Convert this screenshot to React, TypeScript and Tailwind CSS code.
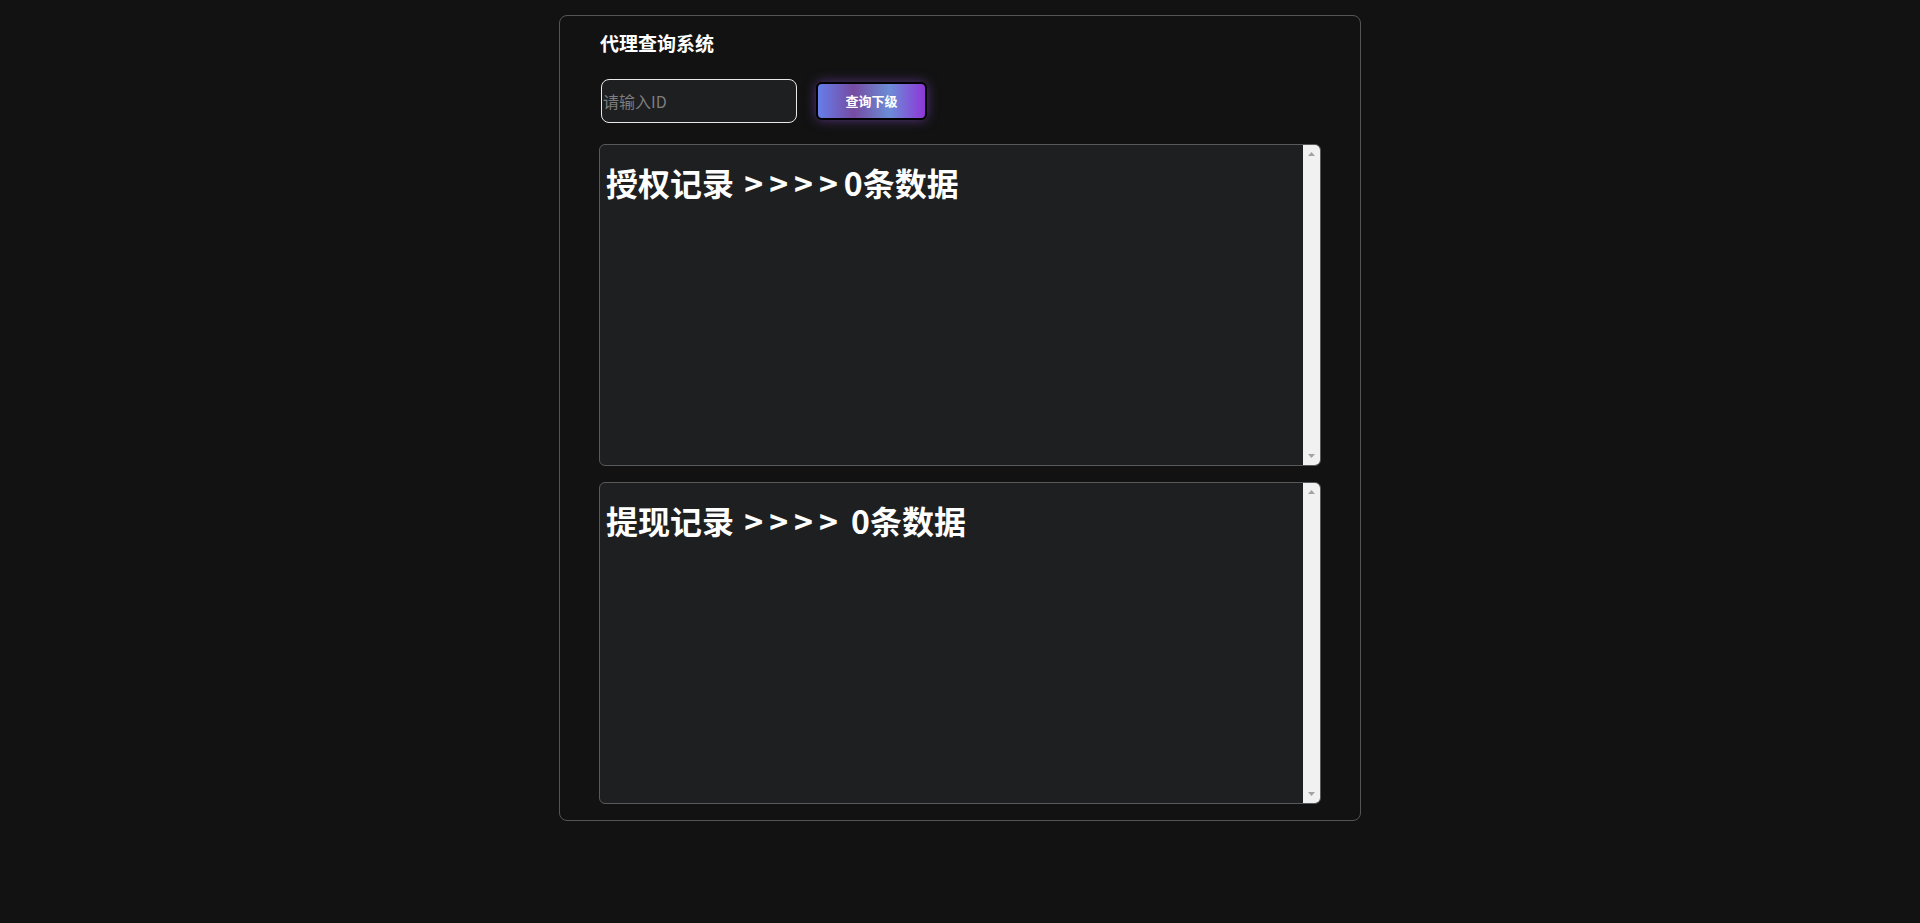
import React from 'react';

const font = { fontFamily: '"Noto Sans CJK SC", "Noto Sans", sans-serif' };

function ScrollBox({ head, tail }: { head: string; tail: string }) {
  return (
    <div className="flex h-[322px] overflow-hidden rounded-md border border-[#58595b] bg-[#1e1f21]">
      <div className="flex-1 px-[6px] pt-[14px]">
        <h1 className="text-[32px] font-bold leading-[46px] text-white">
          {head} <span className="ml-[3px] tracking-[6px]">&gt;&gt;&gt;&gt;</span>
          {tail}
        </h1>
      </div>
      <div className="flex w-[17px] flex-col items-center justify-between bg-[#f1f1f1] py-[7px]">
        <svg width="7" height="4" viewBox="0 0 7 4">
          <path d="M3.5 0 L7 4 L0 4 Z" fill="#a3a3a3" />
        </svg>
        <svg width="7" height="4" viewBox="0 0 7 4">
          <path d="M0 0 L7 0 L3.5 4 Z" fill="#a3a3a3" />
        </svg>
      </div>
    </div>
  );
}

export default function App() {
  return (
    <div className="min-h-[923px] bg-[#121212] pt-[15px]" style={font}>
      <div className="mx-auto w-[802px] rounded-lg border border-[#555] px-[39px] pt-[15px] pb-[16px]">
        <h2 className="ml-px text-[19px] font-bold leading-[24px] text-white">代理查询系统</h2>

        <div className="mt-[24px] flex items-center gap-[19px] pl-[2px]">
          <input
            placeholder="请输入ID"
            className="h-[44px] w-[196px] rounded-lg border-[1.5px] border-[#e8e8e8] bg-[#1e1f21] px-px text-[16px] text-white outline-none placeholder:text-[#7d7d7d]"
          />
          <button className="h-[38px] w-[111px] rounded-md border-2 border-black bg-[linear-gradient(to_right,#667eea,#764ba2,#6b8dd6,#8e37d7)] text-[13px] font-bold text-white shadow-[0_0_12px_rgba(140,80,210,0.55)]">
            查询下级
          </button>
        </div>

        <div className="mt-[21px] flex flex-col gap-[16px]">
          <ScrollBox head="授权记录" tail="0条数据" />
          <ScrollBox head="提现记录" tail=" 0条数据" />
        </div>
      </div>
    </div>
  );
}
